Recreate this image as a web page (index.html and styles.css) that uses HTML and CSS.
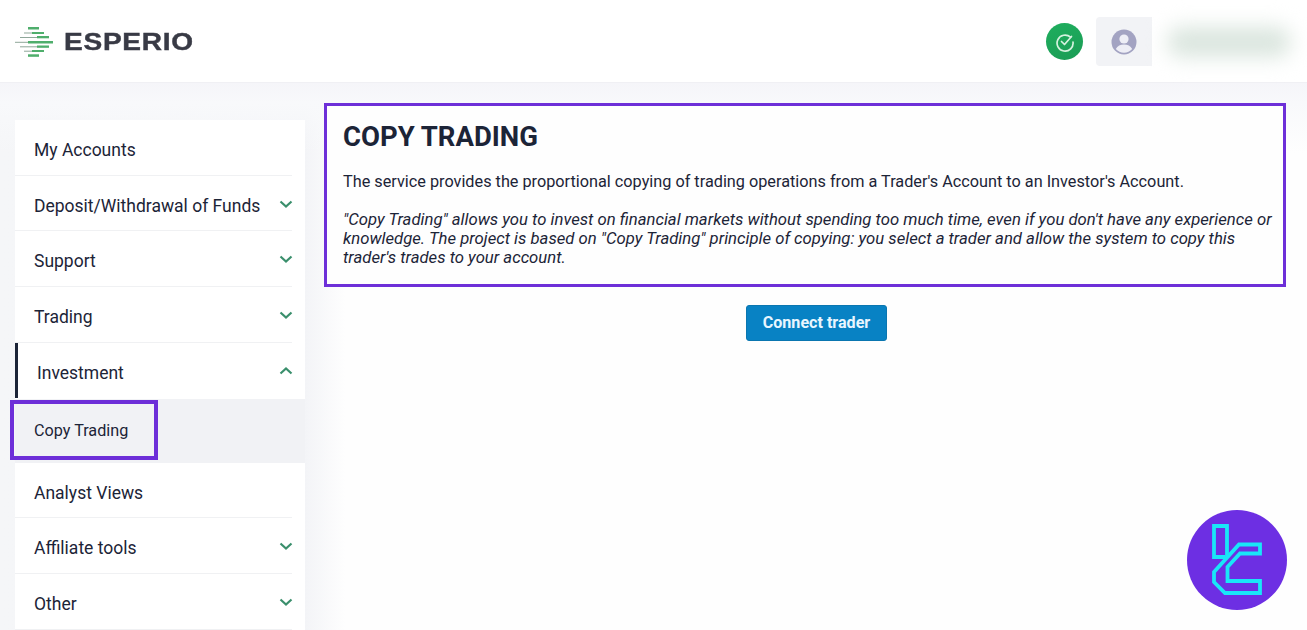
FILE: index.html
```html
<!DOCTYPE html>
<html>
<head>
<meta charset="utf-8">
<title>Esperio - Copy Trading</title>
<link rel="stylesheet" href="styles.css">
</head>
<body>
<header class="topbar">
	<div class="brand">
		<svg class="brand-mark" width="38" height="30" viewBox="0 0 38 30">
			<g fill="#4fae6c">
				<rect x="13" y="0" width="11" height="2.500"/>
				<rect x="17" y="5" width="12" height="2"/>
				<rect x="22" y="9" width="12" height="2.300"/>
				<rect x="13" y="14" width="25" height="2.500"/>
				<rect x="22" y="18.500" width="12" height="2.300"/>
				<rect x="17" y="23" width="12" height="2"/>
				<rect x="13" y="27.300" width="11" height="2.500"/>
			</g>
			<g fill="#8fa79a">
				<rect x="9" y="5.500" width="8" height="1"/>
				<rect x="5" y="10" width="17" height="1"/>
				<rect x="0" y="14.800" width="13" height="1"/>
				<rect x="5" y="19.300" width="17" height="1"/>
				<rect x="9" y="23.700" width="8" height="1"/>
			</g>
		</svg>
		<span class="brand-name">ESPERIO</span>
	</div>
	<div class="topbar-right">
		<span class="status">
			<svg width="20" height="20" viewBox="0 0 20 20" fill="none" stroke="#d6f2df" stroke-width="1.700" stroke-linecap="round" stroke-linejoin="round">
				<path d="M15.500 5.200A8 8 0 1 0 18 10"/>
				<path d="M6.500 9.500l3 3 7-8"/>
			</svg>
		</span>
		<span class="avatar">
			<svg width="26" height="26" viewBox="0 0 26 26">
				<circle cx="13" cy="13" r="12.500" fill="#a3a3c2"/>
				<circle cx="13" cy="10" r="4.600" fill="#eeeef6"/>
				<path d="M4.800 20c1.600-3.400 4.600-4.600 8.200-4.600s6.600 1.200 8.200 4.600a11 11 0 0 1-16.400 0z" fill="#eeeef6"/>
			</svg>
		</span>
		<span class="username"></span>
	</div>
</header>

<div class="page">
	<nav class="sidebar">
		<a class="item">My Accounts</a>
		<a class="item">Deposit/Withdrawal of Funds <svg class="chev" viewBox="0 0 14 8"><path d="M1.500 1.500L7 6.500l5.500-5"/></svg></a>
		<a class="item">Support <svg class="chev" viewBox="0 0 14 8"><path d="M1.500 1.500L7 6.500l5.500-5"/></svg></a>
		<a class="item">Trading <svg class="chev" viewBox="0 0 14 8"><path d="M1.500 1.500L7 6.500l5.500-5"/></svg></a>
		<a class="item open">Investment <svg class="chev" viewBox="0 0 14 8"><path d="M1.500 6.500L7 1.500l5.500 5"/></svg></a>
		<div class="submenu"><a class="subitem">Copy Trading</a></div>
		<a class="item">Analyst Views</a>
		<a class="item">Affiliate tools <svg class="chev" viewBox="0 0 14 8"><path d="M1.500 1.500L7 6.500l5.500-5"/></svg></a>
		<a class="item">Other <svg class="chev" viewBox="0 0 14 8"><path d="M1.500 1.500L7 6.500l5.500-5"/></svg></a>
	</nav>

	<main class="content">
		<section class="intro">
			<h1>COPY TRADING</h1>
			<p>The service provides the proportional copying of trading operations from a Trader's Account to an Investor's Account.</p>
			<p class="note">"Copy Trading" allows you to invest on financial markets without spending too much time, even if you don't have any experience or knowledge. The project is based on "Copy Trading" principle of copying: you select a trader and allow the system to copy this trader's trades to your account.</p>
		</section>
		<div class="actions"><button>Connect trader</button></div>
	</main>
</div>

<svg class="badge" width="100" height="100" viewBox="0 0 100 100">
	<circle cx="50" cy="50" r="50" fill="#6d2fe3"/>
	<g fill="none" stroke="#19e6f8" stroke-width="3.800">
		<path d="M38 47H27V16H40V47"/>
		<path d="M52 34.500H73V43.500H53L40.500 57V71H73V83H38L27 72V62z"/>
	</g>
</svg>
</body>
</html>
```

FILE: styles.css
```css
html, body { margin: 0; padding: 0; height: 100%; overflow: hidden; }
body { font: normal 17.500px/1.2 Roboto, 'Liberation Sans', sans-serif; color: #1c2437; background: #fefefe; }

/* HEADER */
.topbar { display: flex; align-items: center; justify-content: space-between; box-sizing: border-box; height: 83px; padding: 1px 0 0 15px; background: #fff; border-bottom: 1px solid #f0f0f4; }
.brand { display: flex; align-items: center; gap: 11px; }
.brand-mark { display: block; }
.brand-name { margin-top: 1px; font: bold 23px/1 'Liberation Sans', sans-serif; letter-spacing: 0.6px; color: #383a45; -webkit-text-stroke: 0.4px #383a45; transform: scaleX(1.22); transform-origin: left center; }
.topbar-right { display: flex; align-items: center; }
.status { display: flex; align-items: center; justify-content: center; width: 37px; height: 37px; margin-right: 13px; border-radius: 50%; background: linear-gradient(160deg, #1fae5e, #1b9c55); }
.avatar { display: flex; align-items: center; justify-content: center; width: 56px; height: 49px; border-radius: 4px 0 0 4px; background: #f2f3f6; }
.username { display: block; width: 116px; height: 24px; margin: 0 20px 0 19px; border-radius: 12px; background: #dbe6df; box-shadow: 0 0 0 9px rgba(236, 242, 238, 0.7); filter: blur(9px); }

/* LAYOUT */
.page { display: flex; align-items: flex-start; box-sizing: border-box; height: 547px; padding: 20px 21px 0 15px; background: linear-gradient(180deg, #f5f5f9 0, #f8f9fb 20px, rgba(254, 254, 254, 0) 70px), linear-gradient(90deg, #f5f6f8 0, #f3f4f7 305px, #fefefe 345px); }

/* SIDEBAR */
.sidebar { flex: none; width: 290px; margin-top: 17px; background: #fff; }
.item { display: flex; align-items: center; justify-content: space-between; box-sizing: border-box; height: 55.700px; padding: 5px 12px 0 19px; background: linear-gradient(#f0f1f3, #f0f1f3) no-repeat left bottom / calc(100% - 13px) 1px; }
.open { height: 55px; margin-bottom: 1px; padding-top: 6px; background: none; border-left: 3px solid #1c2437; }
.chev { width: 14px; height: 8px; margin-top: -5px; fill: none; stroke: #3a8f6c; stroke-width: 2.200; }
.submenu { box-sizing: border-box; height: 64px; padding-top: 1px; background: #f1f2f5; }
.subitem { display: block; box-sizing: border-box; width: 148px; height: 60px; margin-left: -5px; padding: 16px 0 0 20px; font-size: 16.200px; line-height: 22px; border: 4px solid #6d2fd8; }

/* CONTENT */
.content { flex: 1; margin-left: 19px; }
.intro { box-sizing: border-box; height: 184px; padding: 15px 8px 0 16px; background: #fefefe; border: 3px solid #6d2fd8; }
h1 { margin: 0 0 19px; font-size: 27.500px; line-height: 32px; font-weight: 700; }
.intro p { margin: 0 0 19px; font-size: 16.250px; line-height: 19px; }
.intro .note { font-size: 16.700px; font-style: italic; }
.actions { display: flex; justify-content: center; margin-top: 18px; padding-left: 23px; }
button { box-sizing: border-box; width: 141px; height: 36px; padding: 0; border: 1px solid #0a76b0; border-radius: 3px; font: bold 16.100px/1 Roboto, sans-serif; color: #e8f6ff; background: #0882c4; }

/* WATERMARK */
.badge { position: fixed; left: 1187px; top: 510px; }
```
